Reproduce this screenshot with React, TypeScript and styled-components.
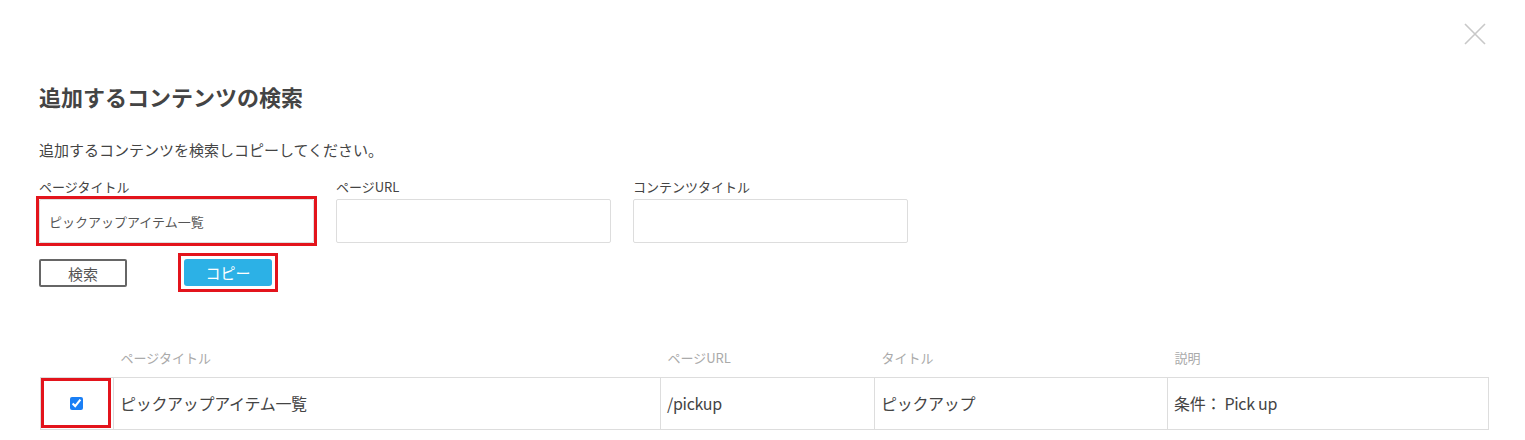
import styled, { createGlobalStyle } from 'styled-components';

const GlobalStyle = createGlobalStyle`
  body {
    margin: 0;
    background: #fff;
    font-family: 'Noto Sans CJK JP', 'Noto Sans', sans-serif;
    color: #444;
  }
`;

const Wrapper = styled.div`
  width: 1525px;
  height: 440px;
  overflow: hidden;
  padding: 0 38px 0 39px;
  box-sizing: border-box;
`;

const CloseRow = styled.div`
  display: flex;
  justify-content: flex-end;
  padding-top: 22px;
  height: 80px;
  box-sizing: border-box;
`;

const CloseBtn = styled.button`
  border: none;
  background: none;
  padding: 0;
  width: 24px;
  height: 24px;
  cursor: pointer;
  svg {
    display: block;
  }
`;

const Title = styled.h2`
  margin: 0;
  font-size: 22px;
  line-height: 32px;
  font-weight: 700;
  color: #444;
`;

const Lead = styled.p`
  margin: 27px 0 0;
  font-size: 15px;
  line-height: 22px;
  color: #444;
`;

const Fields = styled.div`
  display: flex;
  gap: 22px;
  margin-top: 18px;
`;

const Field = styled.label`
  display: flex;
  flex-direction: column;
  gap: 4px;
  width: 275px;
`;

const FieldLabel = styled.span`
  font-size: 13px;
  line-height: 16px;
  color: #444;
`;

// red annotation frame drawn around a control
const Marker = styled.div<{ $pad: number }>`
  display: inline-flex;
  align-self: flex-start;
  border: 3px solid #e3141c;
  padding: ${(p) => p.$pad}px;
  margin: -${(p) => p.$pad + 3}px;
`;

const Input = styled.input`
  box-sizing: border-box;
  width: 275px;
  height: 44px;
  border: 1px solid #ddd;
  border-radius: 2px;
  padding: 0 9px;
  font-family: inherit;
  font-size: 13px;
  color: #555;
  outline: none;
`;

const Buttons = styled.div`
  display: flex;
  gap: 57px;
  margin-top: 16px;
  align-items: center;
`;

const SearchBtn = styled.button`
  box-sizing: border-box;
  width: 88px;
  height: 28px;
  border: 2px solid #666;
  background: #fff;
  border-radius: 2px;
  font-family: inherit;
  font-size: 15px;
  color: #555;
  padding: 0;
`;

const CopyBtn = styled.button`
  box-sizing: border-box;
  width: 88px;
  height: 27px;
  border: none;
  background: #2cb1e6;
  border-radius: 3px;
  font-family: inherit;
  font-size: 15px;
  color: #fff;
  padding: 0;
`;

const Table = styled.table`
  margin-top: 62px;
  border-collapse: collapse;
  table-layout: fixed;
  width: 1448px;
  margin-left: 1px;
`;

const Th = styled.th<{ $w: number }>`
  box-sizing: border-box;
  width: ${(p) => p.$w}px;
  text-align: left;
  font-weight: 400;
  font-size: 13px;
  color: #aaa;
  padding: 0 7px;
  height: 28px;
  vertical-align: top;
  line-height: 18px;
`;

const Td = styled.td`
  border: 1px solid #ddd;
  height: 51px;
  padding: 0 6px;
  font-size: 16px;
  letter-spacing: -0.3px;
  color: #444;
  vertical-align: middle;
  white-space: nowrap;
`;

const CheckCell = styled.td`
  border: 1px solid #ddd;
  height: 51px;
  padding: 0;
`;

const CheckMark = styled.div`
  box-sizing: border-box;
  width: 70px;
  height: 50px;
  border: 3px solid #e3141c;
  display: flex;
  align-items: center;
  justify-content: center;
  input {
    margin: 0;
    width: 13px;
    height: 13px;
    accent-color: #1a7ff5;
  }
`;

export default function App() {
  return (
    <Wrapper>
      <GlobalStyle />
      <CloseRow>
        <CloseBtn aria-label="close">
          <svg width="24" height="24" viewBox="0 0 24 24">
            <path d="M2 2L22 22M22 2L2 22" stroke="#c8c8c8" strokeWidth="1.6" fill="none" />
          </svg>
        </CloseBtn>
      </CloseRow>
      <Title>追加するコンテンツの検索</Title>
      <Lead>追加するコンテンツを検索しコピーしてください。</Lead>
      <Fields>
        <Field>
          <FieldLabel>ページタイトル</FieldLabel>
          <Marker $pad={0}>
            <Input defaultValue="ピックアップアイテム一覧" />
          </Marker>
        </Field>
        <Field>
          <FieldLabel>ページURL</FieldLabel>
          <Input />
        </Field>
        <Field>
          <FieldLabel>コンテンツタイトル</FieldLabel>
          <Input />
        </Field>
      </Fields>
      <Buttons>
        <SearchBtn>検索</SearchBtn>
        <Marker $pad={3}>
          <CopyBtn>コピー</CopyBtn>
        </Marker>
      </Buttons>
      <Table>
        <thead>
          <tr>
            <Th $w={73}></Th>
            <Th $w={547}>ページタイトル</Th>
            <Th $w={214}>ページURL</Th>
            <Th $w={293}>タイトル</Th>
            <Th $w={321}>説明</Th>
          </tr>
        </thead>
        <tbody>
          <tr>
            <CheckCell>
              <CheckMark>
                <input type="checkbox" defaultChecked />
              </CheckMark>
            </CheckCell>
            <Td>ピックアップアイテム一覧</Td>
            <Td>/pickup</Td>
            <Td>ピックアップ</Td>
            <Td>条件： Pick up</Td>
          </tr>
        </tbody>
      </Table>
    </Wrapper>
  );
}
